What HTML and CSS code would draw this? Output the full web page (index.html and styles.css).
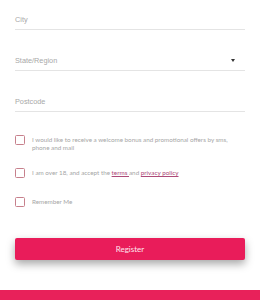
FILE: index.html
```html
<!DOCTYPE html>
<html>
<head>
<meta charset="utf-8">
<link rel="stylesheet" href="styles.css">
</head>
<body>
<div class="form">
  <div class="field"><span class="ph">City</span></div>
  <div class="field select"><span class="ph">State/Region</span><span class="arrow"></span></div>
  <div class="field"><span class="ph">Postcode</span></div>

  <div class="check row1"><span class="box"></span><span class="label">I would like to receive a welcome bonus and promotional offers by sms, phone and mail</span></div>
  <div class="check row2"><span class="box"></span><span class="label">I am over 18, and accept the <a class="link">terms </a>and <a class="link">privacy policy</a></span></div>
  <div class="check row3"><span class="box"></span><span class="label">Remember Me</span></div>

  <div class="btn">Register</div>
</div>
<div class="footer"></div>
</body>
</html>
```

FILE: styles.css
```css
html, body {
  margin: 0;
  padding: 0;
  background: #fff;
}
body {
  width: 260px;
  height: 300px;
  overflow: hidden;
  display: flex;
  flex-direction: column;
}
.form {
  padding: 9px 15px 0 15px;
  display: flex;
  flex-direction: column;
}
.field {
  height: 20px;
  border-bottom: 1px solid #e4e4e4;
  display: flex;
  align-items: center;
  justify-content: space-between;
  margin-bottom: 20px;
  font-family: "Liberation Sans", Arial, sans-serif;
  font-size: 7.3px;
  color: #a8a8a8;
}
.arrow {
  width: 0;
  height: 0;
  border-left: 2px solid transparent;
  border-right: 2px solid transparent;
  border-top: 3px solid #333;
  margin-right: 10px;
}
.check {
  display: flex;
  align-items: flex-start;
  gap: 7px;
  font-family: Lato, sans-serif;
  font-size: 6.3px;
  line-height: 7.5px;
  color: #a6a6a6;
}
.box {
  flex: none;
  width: 8px;
  height: 8px;
  border: 1px solid #c7808c;
  border-radius: 1.5px;
  margin-top: -1px;
}
.label {
  width: 200px;
}
.row1 { margin-top: 4px; }
.row2 { margin-top: 18px; }
.row3 { margin-top: 20px; }
.link {
  color: #ad4a78;
  text-decoration: underline;
}
.btn {
  margin-top: 31px;
  height: 22px;
  background: #e91c5a;
  border-radius: 2px;
  box-shadow: 0 4px 8px rgba(0,0,0,0.35);
  display: flex;
  align-items: center;
  justify-content: center;
  font-family: Lato, sans-serif;
  font-size: 8px;
  color: #fde6ee;
}
.footer {
  margin-top: 30px;
  height: 10px;
  background: #e8215a;
  flex: none;
}
```
